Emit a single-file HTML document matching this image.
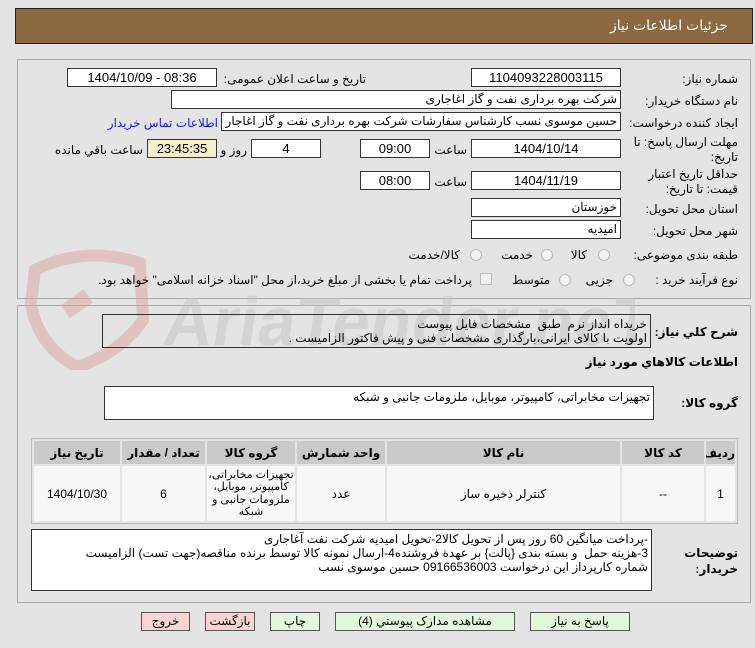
<!DOCTYPE html>
<html><head><meta charset="utf-8"><style>
*{margin:0;padding:0;box-sizing:border-box}
body{width:755px;height:648px;background:#e4e4e4;font-family:"Liberation Sans","DejaVu Sans",sans-serif;font-size:12px;color:#000;position:relative;overflow:hidden}
.a{position:absolute;white-space:nowrap}
.box{position:absolute;background:#fff;border:1px solid #333;text-align:center;line-height:17px;font-size:13px;white-space:nowrap;overflow:hidden}
.r{text-align:right;padding-right:3px;direction:rtl;font-size:12px}
.lbl{position:absolute;direction:rtl;text-align:right;white-space:nowrap}
.radio{position:absolute;width:12px;height:12px;border-radius:50%;border:1px solid #bbb;background:#f2f2f2}
.btn{position:absolute;height:19px;border:1px solid #555;text-align:center;line-height:17px;font-size:12px}
table{border-collapse:separate;border-spacing:2px;table-layout:fixed}
td{overflow:hidden;padding:0}
</style></head><body>
<div class="a" style="left:15px;top:8px;width:738px;height:36px;background:#8b6a42;border:1px solid #222"></div>
<div class="a" style="right:27px;top:17px;color:#fff;font-size:14px">جزئیات اطلاعات نیاز</div>

<div class="a" style="left:17px;top:59px;width:734px;height:240px;border:1px solid #aaa"></div>
<div class="a" style="left:17px;top:305px;width:734px;height:298px;border:1px solid #aaa"></div>

<!-- watermark -->
<svg class="a" style="left:15px;top:245px;opacity:0.5" width="620" height="125">
<path d="M20 25 Q70 0 125 18 L128 75 Q105 108 62 122 Q22 100 16 58 Z" fill="none" stroke="#dba3a3" stroke-width="12"/>
<rect x="48" y="52" width="28" height="16" fill="#dba3a3" transform="rotate(-35 60 60)"/>
<text x="160" y="100" font-family="Liberation Sans" font-weight="bold" font-size="68" fill="#c4c4c4" transform="skewX(-8)">AriaTender.neT</text>
</svg>

<div class="lbl" style="right:17px;top:72px">شماره نیاز:</div>
<div class="box" style="left:471px;top:68px;width:150px;height:19px">1104093228003115</div>
<div class="lbl" style="right:389px;top:72px">تاریخ و ساعت اعلان عمومی:</div>
<div class="box" style="left:67px;top:68px;width:150px;height:19px">1404/10/09 - 08:36</div>

<div class="lbl" style="right:17px;top:94px">نام دستگاه خریدار:</div>
<div class="box r" style="left:171px;top:90px;width:450px;height:19px">شرکت بهره برداری نفت و گاز اغاجاری</div>

<div class="lbl" style="right:17px;top:116px">ایجاد کننده درخواست:</div>
<div class="box r" style="left:221px;top:112px;width:400px;height:19px">حسین موسوی نسب کارشناس سفارشات شرکت بهره برداری نفت و گاز اغاجار</div>
<div class="lbl" style="right:537px;top:116px;color:#1a1adf">اطلاعات تماس خریدار</div>

<div class="lbl" style="right:17px;top:135px">مهلت ارسال پاسخ: تا</div>
<div class="lbl" style="right:17px;top:150px">تاریخ:</div>
<div class="box" style="left:471px;top:139px;width:150px;height:19px">1404/10/14</div>
<div class="lbl" style="right:288px;top:143px">ساعت</div>
<div class="box" style="left:360px;top:139px;width:70px;height:19px">09:00</div>
<div class="box" style="left:251px;top:139px;width:70px;height:19px">4</div>
<div class="lbl" style="right:508px;top:143px">روز و</div>
<div class="box" style="left:147px;top:139px;width:70px;height:19px;background:#f2efcc">23:45:35</div>
<div class="lbl" style="right:612px;top:143px">ساعت باقي مانده</div>

<div class="lbl" style="right:17px;top:167px">حداقل تاریخ اعتبار</div>
<div class="lbl" style="right:17px;top:182px">قیمت: تا تاریخ:</div>
<div class="box" style="left:471px;top:171px;width:150px;height:19px">1404/11/19</div>
<div class="lbl" style="right:288px;top:175px">ساعت</div>
<div class="box" style="left:360px;top:171px;width:70px;height:19px">08:00</div>

<div class="lbl" style="right:17px;top:202px">استان محل تحویل:</div>
<div class="box r" style="left:471px;top:198px;width:150px;height:19px">خوزستان</div>
<div class="lbl" style="right:17px;top:224px">شهر محل تحویل:</div>
<div class="box r" style="left:471px;top:220px;width:150px;height:19px">امیدیه</div>

<div class="lbl" style="right:17px;top:248px">طبقه بندی موضوعی:</div>
<div class="radio" style="left:598px;top:249px"></div><div class="lbl" style="right:168px;top:248px">کالا</div>
<div class="radio" style="left:541px;top:249px"></div><div class="lbl" style="right:222px;top:248px">خدمت</div>
<div class="radio" style="left:470px;top:249px"></div><div class="lbl" style="right:295px;top:248px">کالا/خدمت</div>

<div class="lbl" style="right:17px;top:273px">نوع فرآیند خرید :</div>
<div class="radio" style="left:623px;top:274px"></div><div class="lbl" style="right:142px;top:273px">جزیی</div>
<div class="radio" style="left:559px;top:274px"></div><div class="lbl" style="right:205px;top:273px">متوسط</div>
<div class="a" style="left:480px;top:273px;width:12px;height:12px;border:1px solid #bbb;background:#f2f2f2"></div>
<div class="lbl" style="right:283px;top:273px">پرداخت تمام یا بخشی از مبلغ خرید،از محل "اسناد خزانه اسلامی" خواهد بود.</div>

<div class="lbl" style="right:17px;top:325px;font-weight:bold">شرح کلي نیاز:</div>
<div class="box r" style="left:102px;top:314px;width:549px;height:34px;background:transparent;line-height:14px;padding-top:2px">خریداه انداز نرم &nbsp;طبق &nbsp;مشخصات فایل پیوست<br>اولویت با کالای ایرانی،بارگذاری مشخصات فنی و پیش فاکتور الزامیست .</div>
<div class="lbl" style="right:17px;top:355px;font-weight:bold">اطلاعات کالاهاي مورد نیاز</div>

<div class="lbl" style="right:17px;top:396px;font-weight:bold">گروه کالا:</div>
<div class="box r" style="left:104px;top:386px;width:550px;height:34px;line-height:16px;padding-top:2px">تجهیزات مخابراتی، کامپیوتر، موبایل، ملزومات جانبی و شبکه</div>

<div class="a" style="left:31px;top:438px;width:707px;height:86px;border:1px solid #bbb;overflow:hidden">
<table style="width:705px;direction:rtl;font-size:12px;text-align:center">
<colgroup><col style="width:29px"><col style="width:82px"><col style="width:233px"><col style="width:88px"><col style="width:88px"><col style="width:83px"><col></colgroup>
<tr style="background:#c9c9c9;height:23px;font-weight:bold">
<td>ردیف</td><td>کد کالا</td><td>نام کالا</td><td>واحد شمارش</td><td>گروه کالا</td><td>تعداد / مقدار</td><td>تاریخ نیاز</td></tr>
<tr style="background:#f7f7f7;height:55px">
<td>1</td><td>--</td><td>کنترلر ذخیره ساز</td><td>عدد</td><td style="line-height:12.5px;font-size:11px;white-space:normal">تجهیزات مخابراتی، کامپیوتر، موبایل، ملزومات جانبی و شبکه</td><td>6</td><td>1404/10/30</td></tr>
</table></div>

<div class="lbl" style="right:17px;top:546px;font-weight:bold">توضیحات</div>
<div class="lbl" style="right:17px;top:562px;font-weight:bold">خریدار:</div>
<div class="box r" style="left:31px;top:529px;width:621px;height:62px;line-height:14px;padding-top:2px">-پرداخت میانگین 60 روز پس از تحویل کالا2-تحویل امیدیه شرکت نفت آغاجاری<br>3-هزینه حمل &nbsp;و بسته بندی {پالت} بر عهدة فروشنده4-ارسال نمونه کالا توسط برنده مناقصه(جهت تست) الزامیست<br>شماره کارپرداز این درخواست 09166536003 حسین موسوی نسب</div>

<div class="btn" style="left:530px;top:612px;width:100px;background:#e2f8dc">پاسخ به نیاز</div>
<div class="btn" style="left:335px;top:612px;width:180px;background:#e2f8dc">مشاهده مدارک پیوستي (4)</div>
<div class="btn" style="left:270px;top:612px;width:50px;background:#e2f8dc">چاپ</div>
<div class="btn" style="left:205px;top:612px;width:50px;background:#fbd3d3">بازگشت</div>
<div class="btn" style="left:141px;top:612px;width:49px;background:#fbd3d3">خروج</div>
</body></html>
